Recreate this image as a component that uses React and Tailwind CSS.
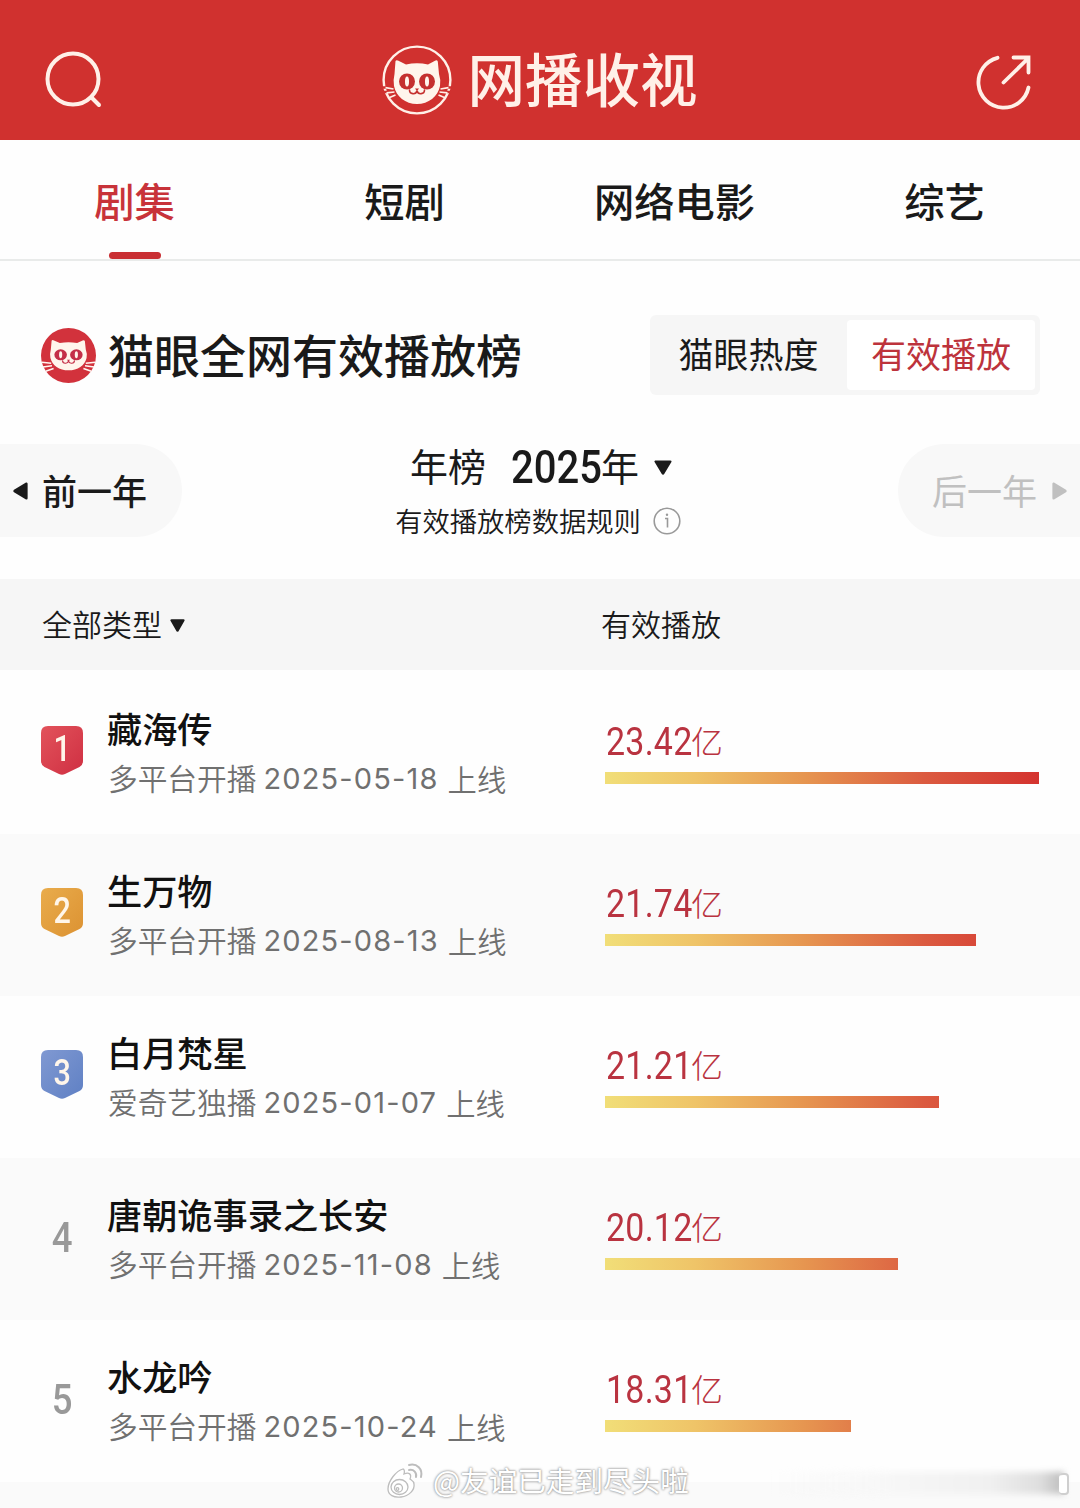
import React from 'react';
import { useState } from 'react';

const tabs = ['剧集', '短剧', '网络电影', '综艺'];

const rows = [
    { rank: 1, title: '藏海传', platform: '多平台开播', date: '2025-05-18', value: '23.42', bar: 434 },
    { rank: 2, title: '生万物', platform: '多平台开播', date: '2025-08-13', value: '21.74', bar: 371 },
    { rank: 3, title: '白月梵星', platform: '爱奇艺独播', date: '2025-01-07', value: '21.21', bar: 334 },
    { rank: 4, title: '唐朝诡事录之长安', platform: '多平台开播', date: '2025-11-08', value: '20.12', bar: 293 },
    { rank: 5, title: '水龙吟', platform: '多平台开播', date: '2025-10-24', value: '18.31', bar: 246 },
];

const badgeColors = {
    1: ['#e2535b', '#cf2f42'],
    2: ['#e9ac4c', '#dc9232'],
    3: ['#8099d2', '#5f80c4'],
};

function CatFace({ eye }) {
    return (
        <g>
            <path
                d="M13.500 16Q14.500 14.500 16.500 15.800L24 19.500Q35 17 46 19.500L53 15.800Q55 14.500 55.800 16.500L57 29Q59 35 58 41C56 51.500 46.500 59 35 59S14 51.500 12 41Q11 35 12.500 29Z"
                fill="#fff5ec"
            />
            <circle cx="25" cy="36.500" r="8" fill={eye} />
            <circle cx="45" cy="36.500" r="8" fill={eye} />
            <ellipse cx="25" cy="36.500" rx="2" ry="5" fill="#fff5ec" />
            <ellipse cx="45" cy="36.500" rx="2" ry="5" fill="#fff5ec" />
            <path d="M33 43.500h4l-2 2.500z" fill={eye} />
            <path d="M27.500 45c0 4.500 6.500 5 7.500 0.800c1 4.200 7.500 3.700 7.500 -0.800" fill="none" stroke={eye} strokeWidth="1.600" strokeLinecap="round" />
        </g>
    );
}

function HeaderLogo() {
    return (
        <svg viewBox="0 0 70 70" className="w-[70px] h-[70px]">
            <circle cx="35" cy="35" r="33.400" fill="none" stroke="#fff0e8" strokeWidth="2.400" />
            <path d="M0 42.500h4M66 42.500h4M1 47h4M65 47h4" stroke="#d0312f" strokeWidth="2.500" />
            <CatFace eye="#c5302f" />
            <path
                d="M3.500 42.700l8 1.300M4.500 47.800l8 -.8M7 52.800l6.500 -2.800M66.500 42.700l-8 1.300M65.500 47.800l-8 -.8M63 52.800l-6.500 -2.800"
                stroke="#fff0e8"
                strokeWidth="1.700"
            />
        </svg>
    );
}

function TitleLogo() {
    return (
        <svg viewBox="0 0 70 70" className="w-[55px] h-[55px]">
            <circle cx="35" cy="35" r="35" fill="#d2323c" />
            <g transform="translate(0 2) scale(1 .88)">
                <CatFace eye="#c42f48" />
            </g>
            <path
                d="M1 43.500l12 1.500M2.500 49.500l11.500 -1.500M6 55l10 -3.500M69 43.500l-12 1.500M67.500 49.500l-11.500 -1.500M64 55l-10 -3.500"
                stroke="#fff5f0"
                strokeWidth="1.900"
            />
        </svg>
    );
}

function Triangle({ className, points }) {
    return (
        <svg viewBox="0 0 20 20" preserveAspectRatio="none" className={className}>
            <polygon points={points} fill="currentColor" stroke="currentColor" strokeWidth="3" strokeLinejoin="round" />
        </svg>
    );
}

const DOWN = '2,2 18,2 10,18';
const LEFT = '18,2 18,18 2,10';
const RIGHT = '2,2 2,18 18,10';

function Rank({ rank }) {
    const colors = badgeColors[rank];
    if (!colors) {
        return (
            <div className="w-[42px] h-[49px] mt-[55px] flex items-center justify-center font-[Roboto] font-medium text-[43px] leading-none text-[#999]">
                <span className="scale-x-85">{rank}</span>
            </div>
        );
    }
    return (
        <div className="relative w-[42px] h-[49px] mt-[54px] flex justify-center">
            <svg viewBox="0 0 42 49" className="absolute inset-0 w-[42px] h-[49px]">
                <defs>
                    <linearGradient id={`badge${rank}`} x1="0" y1="0" x2="1" y2="1">
                        <stop offset="0" stopColor={colors[0]} />
                        <stop offset="1" stopColor={colors[1]} />
                    </linearGradient>
                </defs>
                <path d="M7 0H35Q42 0 42 7V35Q42 39 38.500 41L24 48Q21 49.500 18 48L3.500 41Q0 39 0 35V7Q0 0 7 0Z" fill={`url(#badge${rank})`} />
            </svg>
            <span className="relative scale-x-85 pt-[5px] font-[Roboto] font-medium text-[36px] leading-9 text-[#fff6ea]">{rank}</span>
        </div>
    );
}

function Row({ item }) {
    return (
        <div className="flex h-[162px] pl-[41px] even:bg-[#fafafa]">
            <Rank rank={item.rank} />
            <div className="w-[522px] pl-[25px] pt-[33px]">
                <div className="-ml-px text-[35.200px] leading-[46px] font-medium text-[#111]">{item.title}</div>
                <div className="flex items-center mt-[5px] h-[44px] text-[29.700px] leading-[44px] font-[350] text-[#707070]">
                    <span>{item.platform}</span>
                    <span className="ml-[7px] mt-[2px] font-[Inter] font-normal text-[29px] tracking-[1.150px]">{item.date}</span>
                    <span className="ml-[9px] text-[29.300px]">上线</span>
                </div>
            </div>
            <div className="pt-[46px]">
                <div className="flex items-center h-[46px] text-[#b93340]">
                    <span className="w-[86px] pt-[2px] pl-[1px] font-[Roboto] font-[450] text-[39px] leading-[46px]">
                        <span className="inline-block origin-left scale-x-87 tracking-[0.300px]">{item.value}</span>
                    </span>
                    <span className="-mt-[2px] text-[32px] leading-[46px] font-light">亿</span>
                </div>
                <div
                    className="mt-2 h-[12px] bg-[linear-gradient(90deg,#f1de78_0px,#efc468_90px,#e69550_200px,#db5a40_320px,#d4332f_434px)]"
                    style={{ width: item.bar }}
                />
            </div>
        </div>
    );
}

function Watermark() {
    return (
        <div className="absolute left-[386px] top-[1461px] flex items-center h-[40px]">
            <svg viewBox="0 0 42 40" className="w-[42px] h-[40px]" fill="#fff" stroke="#bdbdbd" strokeWidth="1.300">
                <path d="M17 8c-7 2-15 12-15 20c0 6 6 9 13 8c8-1 14-7 13-13c0-3-3-4-4-5c2-5-1-7-6-5c1-3 0-5-1-5z" />
                <ellipse cx="13.500" cy="26" rx="8.500" ry="7.500" />
                <circle cx="12.500" cy="27" r="4" />
                <circle cx="11.500" cy="28" r="1.300" />
                <path d="M23 4c8-2 14 4 12 12M23 9c5-1 8 3 7 7" fill="none" strokeLinecap="round" strokeWidth="2" />
            </svg>
            <span className="ml-[5px] -mt-[2px] text-[28.600px] leading-[40px] text-white [text-shadow:0_0_2px_#888,0_0_3px_#aaa]">@友谊已走到尽头啦</span>
        </div>
    );
}

export default function App() {
    const [activeTab, setActiveTab] = useState('剧集');

    return (
        <div className="relative w-[1080px] h-[1508px] overflow-hidden bg-[#fefefe] text-[#1a1a1a] font-['Noto_Sans_CJK_SC',sans-serif]">
            <header className="h-[140px] flex items-start justify-between bg-[#d0312f] text-[#fff0e8]">
                <svg viewBox="0 0 60 60" className="w-[60px] h-[60px] mt-[50px] ml-[44px]" fill="none" stroke="currentColor" strokeWidth="4" strokeLinecap="round">
                    <circle cx="29" cy="29" r="25.500" />
                    <path d="M47.500 47.500l7.500 7.500" />
                </svg>
                <div className="flex items-center mt-[45px] h-[70px]">
                    <HeaderLogo />
                    <span className="ml-[16px] -mt-[6px] text-[57.500px] leading-[70px] font-medium">网播收视</span>
                </div>
                <svg viewBox="0 0 60 60" className="w-[60px] h-[60px] mt-[52px] mr-[45px]" fill="none" stroke="currentColor" strokeWidth="3.800" strokeLinecap="round">
                    <path d="M22.500 5.800A25.300 25.300 0 1 0 53.500 35.500" />
                    <path d="M28.500 30.500L53 6.500M38.500 5.500H53.500V20.500" />
                </svg>
            </header>

            <nav className="h-[121px] flex border-b-2 border-[#e9ebea]">
                {tabs.map((tab) => (
                    <button
                        key={tab}
                        onClick={() => setActiveTab(tab)}
                        className={`w-[270px] flex flex-col items-center pt-[31px] text-[40.300px] leading-[58px] font-medium ${activeTab === tab ? 'text-[#c8333a]' : ''}`}
                    >
                        <span className="mr-px">{tab}</span>
                        {activeTab === tab && <span className="mt-[23px] w-[52px] h-2 rounded-full bg-[#c92f33]" />}
                    </button>
                ))}
            </nav>

            <div className="flex items-center h-[80px] mt-[54px] pl-[41px] pr-[40px]">
                <TitleLogo />
                <h1 className="ml-[12px] -mt-[4px] text-[46px] leading-[60px] font-medium">猫眼全网有效播放榜</h1>
                <div className="ml-auto flex w-[390px] h-[80px] p-[5px] rounded-md bg-[#f6f6f6] text-[35px] leading-[65px]">
                    <div className="w-[192px] pr-[5px] text-center">猫眼热度</div>
                    <div className="flex-1 text-center rounded bg-white text-[#bd333c]">有效播放</div>
                </div>
            </div>

            <div className="flex items-start justify-between h-[135px] mt-[49px]">
                <button className="flex items-center w-[182px] h-[93px] pl-[13px] rounded-r-full bg-[#f8f8f8] text-[35px] font-medium">
                    <Triangle className="w-[15px] h-[18px]" points={LEFT} />
                    <span className="ml-[14px] -mt-px">前一年</span>
                </button>
                <div className="flex flex-col items-center">
                    <div className="flex items-center h-[46px] ml-[2px] text-[38px] leading-[46px]">
                        <span className="-mt-[4px]">年榜</span>
                        <span className="ml-[25px] w-[90px] font-[Roboto] font-medium text-[46px]">
                            <span className="inline-block origin-left scale-x-87">2025</span>
                        </span>
                        <span className="-mt-[4px]">年</span>
                        <Triangle className="ml-[15px] w-[18px] h-[15px]" points={DOWN} />
                    </div>
                    <div className="flex items-center mt-[11px] mr-[4px] h-[40px] text-[27.300px] leading-[40px] font-[350]">
                        <span className="-mt-[3px]">有效播放榜数据规则</span>
                        <svg viewBox="0 0 28 28" className="ml-[12px] w-[28px] h-[28px]" fill="none" stroke="#999" strokeWidth="1.600">
                            <circle cx="14" cy="14" r="12.800" />
                            <path d="M12 11.500H14.500V20.500" />
                            <circle cx="14" cy="7.800" r="1.200" fill="#999" stroke="none" />
                        </svg>
                    </div>
                </div>
                <button className="flex items-center justify-end w-[182px] h-[93px] pr-[13px] rounded-l-full bg-[#f8f8f8] text-[35px] text-[#c0c0c0]">
                    <span className="mr-[15px] -mt-px">后一年</span>
                    <Triangle className="w-[15px] h-[18px]" points={RIGHT} />
                </button>
            </div>

            <div className="flex items-center h-[91px] pl-[42px] bg-[#f6f6f6] text-[30px] font-[350]">
                <div className="flex items-center w-[559px]">
                    <span className="-mt-[2px]">全部类型</span>
                    <Triangle className="ml-[8px] mt-px w-[15px] h-[13px]" points={DOWN} />
                </div>
                <div className="-mt-[2px]">有效播放</div>
            </div>

            <div className="pt-[2px]">
                {rows.map((item) => (
                    <Row key={item.rank} item={item} />
                ))}
                <div className="h-[30px] bg-[#fafafa]" />
            </div>

            <Watermark />
            <div className="absolute left-[770px] top-[1472px] w-[294px] h-[22px] blur-[3px] bg-[linear-gradient(90deg,transparent,#f7f7f7_40%,#f0f0f0_75%,#dedede_92%,#bcbcbc)]" />
            <div className="absolute left-[1059px] top-[1473px] w-[10px] h-[22px] rounded-sm border-2 border-l-0 border-[#cfcfcf] bg-white" />
        </div>
    );
}
